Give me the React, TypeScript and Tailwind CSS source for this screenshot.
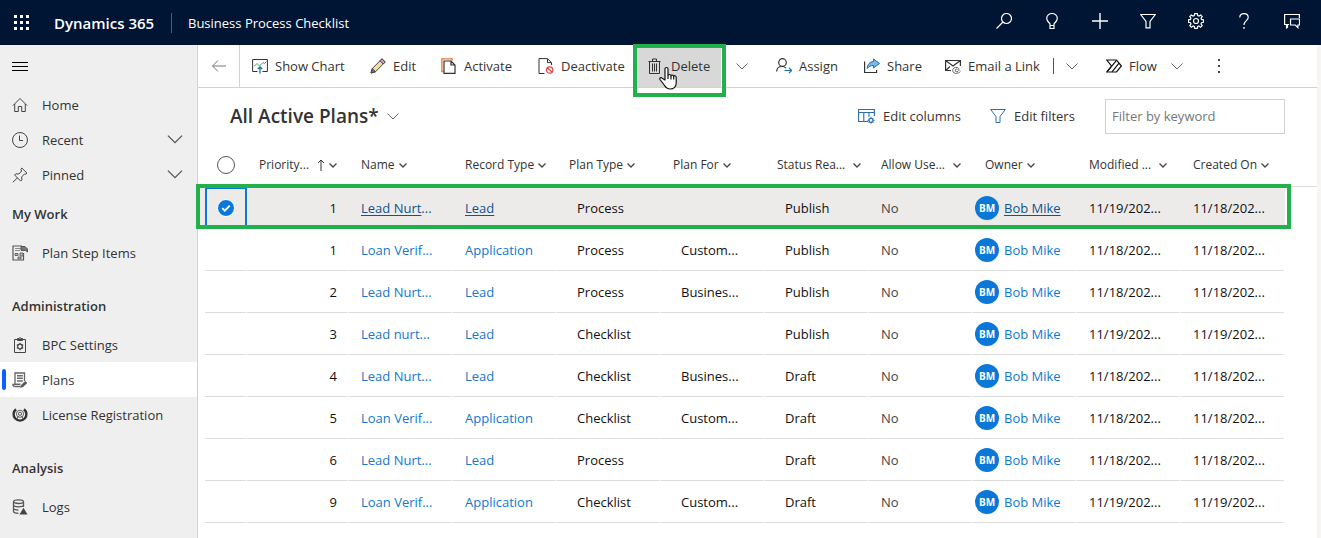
import React from "react";

type IconProps = { children: React.ReactNode; className?: string; box?: string };

function Svg({ children, className = "size-4", box = "0 0 16 16" }: IconProps) {
  return (
    <svg viewBox={box} className={`shrink-0 ${className}`} fill="none" stroke="currentColor" strokeWidth="1" aria-hidden="true">
      {children}
    </svg>
  );
}

const Chevron = ({ className = "w-3 h-[7px] text-[#666]" }: { className?: string }) => (
  <Svg box="0 0 12 7" className={className}>
    <path d="M.5 .5 6 6 11.5 .5" />
  </Svg>
);

const SmallChevron = () => (
  <Svg box="0 0 8 5" className="h-[5px] w-2 text-[#444]">
    <path d="M.5 .5 4 4 7.5 .5" strokeWidth="1.3" />
  </Svg>
);

/* Top bar icons */

const topIcons: { label: string; art: React.ReactNode }[] = [
  {
    label: "Search",
    art: (
      <>
        <circle cx="10.5" cy="5.5" r="5" strokeWidth="1.2" />
        <path d="M7 9 .5 15.5" strokeWidth="1.2" />
      </>
    ),
  },
  {
    label: "Insights",
    art: <path d="M6 12.500v-1.500C5.500 9.500 2.700 8.500 2.700 5.300a5.300 4.800 0 0 1 10.600 0C13.300 8.500 10.500 9.500 10 11v4.500H6V12.500H10" strokeWidth="1.2" />,
  },
  { label: "New", art: <path d="M8 0v16M0 8h16" strokeWidth="1.4" /> },
  { label: "Filter", art: <path d="M.7 1.500h14.600L10 8.500v6.300H6V8.500Z" strokeWidth="1.2" /> },
  {
    label: "Settings",
    art: (
      <>
        <path d="M6.700 .6h2.600l.4 2 1.300.5 1.700-1.100 1.500 1.500L13.100 5.200l.4 1.200 2 .4v2.500l-2 .4-.5 1.200 1.200 1.700-1.600 1.600-1.700-1.200-1.200.5-.4 1.900H6.700l-.4-1.900-1.200-.5-1.700 1.200L1.800 12.600 3 10.900l-.5-1.200-2-.4V6.800l2-.4.4-1.200L1.800 3.500 3.300 2 5 3.100l1.300-.5Z" strokeWidth="1.2" />
        <circle cx="8" cy="8" r="2.500" strokeWidth="1.2" />
      </>
    ),
  },
  {
    label: "Help",
    art: (
      <>
        <path d="M3.800 4.600C3.800 2.200 5.500.6 8 .6s4.200 1.600 4.200 3.800C12.200 7.500 8 7.800 8 12" strokeWidth="1.2" />
        <path d="M8 14v1.800" strokeWidth="1.400" />
      </>
    ),
  },
  {
    label: "Feedback",
    art: (
      <>
        <path d="M5 11.500H3.500v3L2.500 15V11.500H.6V1.500h14.800V5" strokeWidth="1.2" />
        <path d="M6.500 6h9v6h-1.600v2.600L11.300 12H6.500Z" strokeWidth="1.2" />
      </>
    ),
  },
];

/* Command bar icons */

const ShowChartIcon = () => (
  <Svg>
    <path d="M5.500 13.500H.6v-12h14.800v12h-5" stroke="#333" />
    <path d="M2 8.500 5 5.500l2.500 2.500L11 4.500l1.500 1 2-2" stroke="#2faa60" />
    <path d="M8 15.500V9M5.800 11 8 8.800 10.200 11" stroke="#1a6fb5" strokeWidth="1.300" />
  </Svg>
);
const EditIcon = () => (
  <Svg>
    <path d="m1 15 1.300-4.500L12 .8l3.200 3.200L5.500 13.700Z" fill="#f7dc9b" stroke="#444" />
    <path d="m12 .8 3.200 3.200-2 2L10 2.800Z" fill="#c9a0d8" stroke="#444" />
    <path d="m1 15 1.300-4.500 3.200 3.200Z" fill="#777" stroke="#444" />
  </Svg>
);
const ActivateIcon = () => (
  <Svg>
    <path d="M2.500 13.500H.9V.9h10.200V2.500" stroke="#e8772e" strokeWidth="1.300" />
    <path d="M3 3h7l4 4v8.400H3ZM10 3v4h4" stroke="#333" strokeWidth="1.200" />
  </Svg>
);
const DeactivateIcon = () => (
  <Svg>
    <path d="M6.500 15.500H1V.6h8.500l4 4V7M9.500 .6v4h4" stroke="#333" />
    <circle cx="11.700" cy="12" r="3.200" stroke="#dd4040" strokeWidth="1.200" />
    <path d="m9.500 9.800 4.500 4.400" stroke="#dd4040" strokeWidth="1.200" />
  </Svg>
);
const DeleteIcon = () => (
  <Svg>
    <path d="M.5 3.500h12M4.500 3.500v-2.500h4v2.500M1.500 3.500v12h10v-12M4.500 5.500v8M6.500 5.500v8M8.500 5.500v8" stroke="#333" />
  </Svg>
);
const AssignIcon = () => (
  <Svg>
    <circle cx="6.500" cy="4.500" r="3.800" stroke="#333" strokeWidth="1.200" />
    <path d="M.6 13.500C.8 10.300 3.300 8.500 6 8.500c1.500 0 3 .5 4 1.700" stroke="#333" strokeWidth="1.200" />
    <path d="M8.500 12.500h7M13 9.800l2.600 2.700L13 15.200" stroke="#1a6fb5" strokeWidth="1.200" />
  </Svg>
);
const ShareIcon = () => (
  <Svg>
    <path d="M.6 3.500v11h12V12" stroke="#333" strokeWidth="1.200" />
    <path d="M9.500 1v2.500C5.500 3.800 3.500 6.500 3.200 10.500c1.800-2.300 3.500-3 6.300-3V10l6-4.500Z" fill="#79b8ec" stroke="#1a6fb5" />
  </Svg>
);
const EmailIcon = () => (
  <Svg>
    <path d="M6 12.500H.6v-10h14.800V8M.6 2.500 8 8l7.400-5.500M.6 12.500 5 8.500" stroke="#333" strokeWidth="1.200" />
    <path d="M12.500 11.500a1.300 1.300 0 1 0-1 2.200c2.500 0 3-2.200 2-3.500-1.500-1.500-4.500-1-5.500 1-.9 2 .3 4 2.500 4.200 2.200 0 4-.8 5-2" stroke="#666" />
  </Svg>
);
const FlowIcon = () => (
  <Svg>
    <path d="M.8 2h9.700L15.400 8l-4.900 6H.8l4.700-6Z" stroke="#111" strokeWidth="1.200" />
    <path d="m1 13.800 9.500-11.500M6 13.800 13 5.200" stroke="#111" strokeWidth="1.200" />
  </Svg>
);
const EditColumnsIcon = () => (
  <Svg className="h-4 w-[17px]" box="0 0 17 16">
    <path d="M10 13.500H.6v-12h15.800V8M.6 4.500h15.800M5.800 4.500v9M11 4.500V9" stroke="#2b6cb0" strokeWidth="1.100" />
    <circle cx="13" cy="12.300" r="2" stroke="#2b6cb0" strokeWidth="1.200" />
    <path d="M13 8.800v1.500M13 14.300v1.500M9.500 12.300H11M15 12.300h1.500M10.600 9.900l1 1M14.400 13.700l1 1M15.400 9.900l-1 1M11.600 13.700l-1 1" stroke="#2b6cb0" />
  </Svg>
);
const FilterIcon = () => (
  <Svg>
    <path d="M.7 1.500h14.600L10 8.500v6H6v-6Z" stroke="#2b6cb0" />
  </Svg>
);

/* Site map icons */

const HomeIcon = () => (
  <Svg>
    <path d="M1 8.500 8 1.500l7 7M2.700 7v7.500h3.600V9.500h3.400v5h3.600V7" stroke="#444" />
  </Svg>
);
const RecentIcon = () => (
  <Svg>
    <circle cx="8" cy="8" r="7.500" stroke="#444" />
    <path d="M7.500 3.500v5H11" stroke="#444" />
  </Svg>
);
const PinnedIcon = () => (
  <Svg>
    <path d="M9.800 1 15 6.200l-1.200 1-1.200-.3-2.900 3 .2 3-1.200 1.200L2.600 8l1.200-1.200 3 .2 2.900-3-.9-1.500ZM5.500 10.800.8 15.300" stroke="#444" />
  </Svg>
);
const PlanStepIcon = () => (
  <Svg>
    <path d="M11.500 8v7H1V1h9" stroke="#555" strokeWidth="1.200" />
    <path d="M3 3.500h6M3 5.500h5" stroke="#888" />
    <path d="M9 1.500h4l2.500 2.500v3l-2-1.500H9Z" fill="#777" stroke="#555" />
    <path d="M3 8.500h3v2H3ZM6 12h3v2H6ZM8 8h3v3H8Z" fill="#bbb" stroke="#666" />
  </Svg>
);
const SettingsIcon = () => (
  <Svg>
    <path d="M2.500 2.500h11v13h-11ZM5.500 2.500V1.500h1.700a.8.900 0 0 1 1.600 0h1.700v2h-5Z" stroke="#444" />
    <circle cx="8" cy="9.500" r="2.300" stroke="#444" strokeWidth="1.200" />
    <path d="M8 5.800v1.500M8 11.700v1.500M4.800 7.700l1.300.7M9.900 10.600l1.300.7M11.200 7.700l-1.300.7M6.100 10.600l-1.300.7" stroke="#444" strokeWidth="1.200" />
  </Svg>
);
const PlansIcon = () => (
  <Svg>
    <path d="M8.500 14.500H3.500C1.500 14.500.8 13.500.8 12.300H3V1h9.500v8" stroke="#666" strokeWidth="1.300" />
    <path d="M5 3.700h5.800M5 6.300h5.800M5 9h5.800M3 12.300h5.500" stroke="#666" strokeWidth="1.500" />
    <path d="m8.500 15.500.8-2.500 4-3.700 1.700 1.700-4 3.700Z" fill="#555" stroke="#555" strokeWidth=".5" />
  </Svg>
);
const LicenseIcon = () => (
  <Svg>
    <path d="M4 2.200A6.400 6.400 0 1 0 12 2.200" stroke="#333" strokeWidth="2.400" />
    <circle cx="8" cy="6.800" r="3.600" stroke="#666" />
    <circle cx="8" cy="6.800" r="1.600" stroke="#555" />
    <path d="M6.500 9 4.800 12M9.500 9l1.700 3" stroke="#555" />
  </Svg>
);
const LogsIcon = () => (
  <Svg>
    <ellipse cx="6.500" cy="2.700" rx="5" ry="1.800" stroke="#555" strokeWidth="1.300" />
    <path d="M1.500 3v9.500c0 1 2.500 1.800 5 1.800M11.500 3v5M1.500 6c0 1 2.500 1.800 5 1.800s5-.8 5-1.800M1.500 9.300c0 1 2.500 1.800 5 1.800" stroke="#555" strokeWidth="1.300" />
    <path d="m11.500 8.800 4 6.700h-8Z" fill="#444" stroke="none" />
  </Svg>
);

function NavItem({ icon, label, active, expandable }: { icon: React.ReactNode; label: string; active?: boolean; expandable?: boolean }) {
  return (
    <li className={`relative ${active ? "bg-white" : ""}`}>
      {active && <span className="absolute top-[7px] left-0.5 h-[21px] w-1 rounded-xs bg-[#0b62ff]" />}
      <a href="#" className="flex h-[35px] items-center pr-3.5 pl-3">
        {icon}
        <span className="ml-3.5 flex-1">{label}</span>
        {expandable && <Chevron className="h-[9px] w-4 text-[#555]" />}
      </a>
    </li>
  );
}

function NavGroup({ title, children }: { title: string; children: React.ReactNode }) {
  return (
    <section className="mb-[14px]">
      <h2 className="flex h-[43px] items-center pl-3 font-semibold">{title}</h2>
      <ul>{children}</ul>
    </section>
  );
}

function Command({ icon, label, className }: { icon: React.ReactNode; label: string; className: string }) {
  return (
    <button type="button" className={`flex h-full shrink-0 items-center gap-[7px] pl-3 whitespace-nowrap ${className}`}>
      {icon}
      {label}
    </button>
  );
}

function MenuButton({ label, className }: { label: string; className: string }) {
  return (
    <button type="button" aria-label={label} className={`flex h-full shrink-0 items-center ${className}`}>
      <Chevron />
    </button>
  );
}

const columns = ["Priority...", "Name", "Record Type", "Plan Type", "Plan For", "Status Rea...", "Allow Use...", "Owner", "Modified ...", "Created On"];

type Plan = { order: number; name: string; type: string; plan: string; target: string; status: string; modified: string; created: string };

const plans: Plan[] = [
  { order: 1, name: "Lead Nurt...", type: "Lead", plan: "Process", target: "", status: "Publish", modified: "11/19/202...", created: "11/18/202..." },
  { order: 1, name: "Loan Verif...", type: "Application", plan: "Process", target: "Custom...", status: "Publish", modified: "11/18/202...", created: "11/18/202..." },
  { order: 2, name: "Lead Nurt...", type: "Lead", plan: "Process", target: "Busines...", status: "Publish", modified: "11/18/202...", created: "11/18/202..." },
  { order: 3, name: "Lead nurt...", type: "Lead", plan: "Checklist", target: "", status: "Publish", modified: "11/19/202...", created: "11/19/202..." },
  { order: 4, name: "Lead Nurt...", type: "Lead", plan: "Checklist", target: "Busines...", status: "Draft", modified: "11/18/202...", created: "11/18/202..." },
  { order: 5, name: "Loan Verif...", type: "Application", plan: "Checklist", target: "Custom...", status: "Draft", modified: "11/18/202...", created: "11/18/202..." },
  { order: 6, name: "Lead Nurt...", type: "Lead", plan: "Process", target: "", status: "Draft", modified: "11/18/202...", created: "11/18/202..." },
  { order: 9, name: "Loan Verif...", type: "Application", plan: "Checklist", target: "Custom...", status: "Draft", modified: "11/19/202...", created: "11/19/202..." },
];

function PlanRow({ plan, selected }: { plan: Plan; selected: boolean }) {
  const cell = `h-[42px] p-0 border-b border-r-2 whitespace-nowrap ${selected ? "border-[#ecebea]" : "border-b-[#dcdcdc] border-r-white"}`;
  const link = selected ? "text-[#0f5391] underline underline-offset-2" : "text-[#1177cf]";
  return (
    <tr className={selected ? "bg-[#ecebea]" : ""}>
      <td className="p-0" />
      <td className={selected ? "border-2 border-[#0b78d8] p-0" : cell}>
        {selected && (
          <label className="flex justify-center">
            <input type="checkbox" defaultChecked aria-label="Select row" className="peer sr-only" />
            <Svg className="size-[18px]" box="0 0 18 18">
              <circle cx="9" cy="9" r="8.500" fill="#0b78d8" stroke="#fff" />
              <path d="m5.300 9.200 2.500 2.500 5-5" stroke="#fff" strokeWidth="1.800" />
            </Svg>
          </label>
        )}
      </td>
      <td className={`${cell} pr-2.5 text-right`}>{plan.order}</td>
      <td className={`${cell} pl-3`}>
        <a href="#" className={link}>{plan.name.replace("...", "")}</a>
        <span className={selected ? "text-[#0f5391]" : "text-[#1177cf]"}>...</span>
      </td>
      <td className={`${cell} pl-3`}><a href="#" className={link}>{plan.type}</a></td>
      <td className={`${cell} pl-5`}>{plan.plan}</td>
      <td className={`${cell} pl-5`}>{plan.target}</td>
      <td className={`${cell} pl-5`}>{plan.status}</td>
      <td className={`${cell} pl-3 text-[#444]`}>No</td>
      <td className={`${cell} pl-0.5`}>
        <div className="flex items-center gap-[5px]">
          <span className="flex size-6 items-center justify-center rounded-full bg-[#0b78d8] text-[10px] font-bold text-white">BM</span>
          <a href="#" className={link}>Bob Mike</a>
        </div>
      </td>
      <td className={`${cell} pl-3`}>{plan.modified}</td>
      <td className={`${cell} pl-3`}>{plan.created}</td>
      <td className="bg-white p-0" />
    </tr>
  );
}

export default function App() {
  return (
    <div className="flex min-h-screen flex-col overflow-hidden bg-white font-['Open_Sans',sans-serif] text-[13px] leading-5 text-[#333]">
      <header className="flex h-[45px] shrink-0 items-center bg-[#001433] pr-[21px] text-white">
        <button type="button" aria-label="App launcher" className="ml-[13px]">
          <Svg className="size-[17px]" box="0 0 17 17">
            <path d="M1 2.500h3M7 2.500h3M13 2.500h3M1 8.500h3M7 8.500h3M13 8.500h3M1 14.500h3M7 14.500h3M13 14.500h3" strokeWidth="3" />
          </Svg>
        </button>
        <a href="#" className="ml-6 w-[101px] text-[15px] font-semibold whitespace-nowrap">Dynamics 365</a>
        <span className="mx-4 h-5 w-px bg-[#4d5a70]" />
        <span className="whitespace-nowrap">Business Process Checklist</span>
        <div className="ml-auto flex -translate-y-0.5 gap-8">
          {topIcons.map((i) => (
            <button type="button" key={i.label} aria-label={i.label}>
              <Svg>{i.art}</Svg>
            </button>
          ))}
        </div>
      </header>

      <div className="flex flex-1">
        <nav className="w-[198px] shrink-0 border-r border-[#d2d2d2] bg-[#efefef]">
          <button type="button" aria-label="Site map" className="flex h-[42px] items-center pl-3 text-black">
            <Svg><path d="M0 4.500h16M0 8.500h16M0 12.500h16" /></Svg>
          </button>
          <ul>
            <NavItem icon={<HomeIcon />} label="Home" />
            <NavItem icon={<RecentIcon />} label="Recent" expandable />
            <NavItem icon={<PinnedIcon />} label="Pinned" expandable />
          </ul>
          <NavGroup title="My Work">
            <NavItem icon={<PlanStepIcon />} label="Plan Step Items" />
          </NavGroup>
          <NavGroup title="Administration">
            <NavItem icon={<SettingsIcon />} label="BPC Settings" />
            <NavItem icon={<PlansIcon />} label="Plans" active />
            <NavItem icon={<LicenseIcon />} label="License Registration" />
          </NavGroup>
          <NavGroup title="Analysis">
            <NavItem icon={<LogsIcon />} label="Logs" />
          </NavGroup>
        </nav>

        <main className="min-w-0 flex-1 border-r-4 border-[#f7f6f5]">
          <div className="flex h-[43px] items-center border-b border-[#d2d2d2]">
            <button type="button" aria-label="Back" className="flex h-full w-[42px] shrink-0 items-center justify-center border-r border-[#d2d2d2] text-[#777]">
              <Svg><path d="M15 8H1.500M7 2.500 1.500 8 7 13.500" /></Svg>
            </button>
            <Command className="w-[118px]" icon={<ShowChartIcon />} label="Show Chart" />
            <Command className="w-[71px]" icon={<EditIcon />} label="Edit" />
            <Command className="w-[97px]" icon={<ActivateIcon />} label="Activate" />
            <Command className="w-[110px]" icon={<DeactivateIcon />} label="Deactivate" />
            <div className="relative h-full shrink-0">
              <Command className="w-[85px] bg-[#d8d8d8]" icon={<DeleteIcon />} label="Delete" />
              <div className="pointer-events-none absolute -top-px -right-[5px] -bottom-[10px] -left-[3px] border-4 border-[#22b04c]" />
              <svg viewBox="0 0 18 24" className="absolute top-[21px] left-[23px] h-6 w-[18px]" fill="#fff" stroke="#111" strokeWidth="1.200" strokeLinejoin="round" aria-hidden="true">
                <path d="M6 14V3C6 1 9 1 9 3v6.500C9 8 12 8.200 12 10c0-1.500 2.700-1.200 2.700.5 0-1.300 2.500-1 2.500.8V17c0 3.500-2.500 6-6 6-3.200 0-4.500-1.500-6-4L1 13.500c-.8-1.500 1-2.500 2.200-1.300Z" />
                <path d="M9 9.500V13M12 10v3.500M14.700 10.500V13.500" />
              </svg>
            </div>
            <MenuButton label="More delete options" className="w-[43px] pl-[15px]" />
            <Command className="w-[88px]" icon={<AssignIcon />} label="Assign" />
            <Command className="w-[81px]" icon={<ShareIcon />} label="Share" />
            <Command className="w-[120px]" icon={<EmailIcon />} label="Email a Link" />
            <span className="h-4 w-px shrink-0 bg-[#555]" />
            <MenuButton label="More email options" className="w-10 pl-3" />
            <Command className="w-[77px]" icon={<FlowIcon />} label="Flow" />
            <MenuButton label="Flow options" className="w-7" />
            <button type="button" aria-label="More commands" className="flex h-full w-10 shrink-0 items-center justify-center">
              <Svg><path d="M8 1v2M8 7v2M8 13v2" strokeWidth="2" stroke="#444" /></Svg>
            </button>
          </div>

          <div className="flex h-14 items-center pr-8 pl-8">
            <button type="button" className="flex items-center gap-2 whitespace-nowrap">
              <h1 className="text-[19px] leading-6 font-semibold">All Active Plans*</h1>
              <Chevron />
            </button>
            <button type="button" className="ml-auto flex w-[132px] items-center gap-2 whitespace-nowrap">
              <EditColumnsIcon />
              Edit columns
            </button>
            <button type="button" className="flex w-[115px] items-center gap-2 whitespace-nowrap">
              <FilterIcon />
              Edit filters
            </button>
            <input type="text" aria-label="Filter by keyword" placeholder="Filter by keyword" className="h-[35px] w-[180px] border border-[#d2d2d2] bg-white px-1.5 placeholder:text-[#777]" />
          </div>

          <div className="relative">
            <table className="w-full table-fixed border-separate border-spacing-0 text-left text-[#111]">
              <colgroup>
                <col className="w-[7px]" />
                <col className="w-[42px]" />
                {columns.map((c, i) => <col key={c} className={i === 0 ? "w-[102px]" : ""} />)}
                <col className="w-8" />
              </colgroup>
              <thead>
                <tr className="text-[12px] text-[#333]">
                  <th className="h-[43px] border-b border-[#dcdcdc] p-0" />
                  <th className="border-b border-[#dcdcdc] p-0">
                    <label className="flex justify-center">
                      <input type="checkbox" aria-label="Select all rows" className="size-[18px] appearance-none rounded-full border border-[#555]" />
                    </label>
                  </th>
                  {columns.map((c, i) => (
                    <th key={c} className="border-b border-[#dcdcdc] p-0 pl-3 font-medium whitespace-nowrap">
                      <button type="button" className={`flex items-center ${i === 5 || i === 6 || i === 8 ? "gap-2" : "gap-1"}`}>
                        {c}
                        {i === 0 && (
                          <Svg className="ml-1 h-3 w-2" box="0 0 8 12"><path d="M4 12V1M1 4l3-3 3 3" /></Svg>
                        )}
                        <SmallChevron />
                      </button>
                    </th>
                  ))}
                  <th className="border-b border-[#dcdcdc] p-0" />
                </tr>
              </thead>
              <tbody>
                {plans.map((p, i) => <PlanRow key={i} plan={p} selected={i === 0} />)}
              </tbody>
            </table>
            <div className="pointer-events-none absolute top-10 right-[26px] -left-0.5 h-[45px] border-4 border-[#22b04c]" />
          </div>
        </main>
      </div>
    </div>
  );
}
